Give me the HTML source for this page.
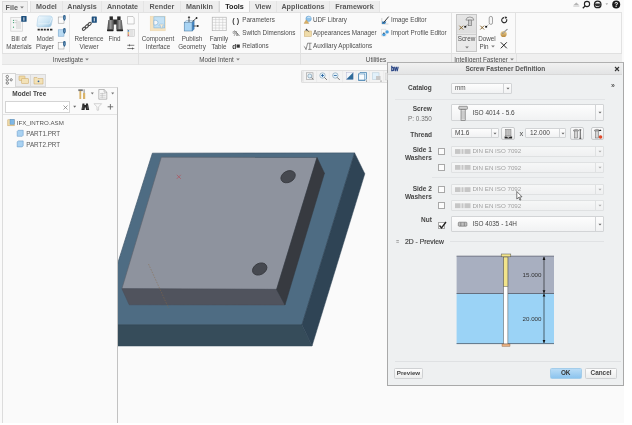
<!DOCTYPE html>
<html><head><meta charset="utf-8">
<style>
*{margin:0;padding:0;box-sizing:border-box}
html,body{width:632px;height:425px;overflow:hidden;background:#ffffff}
body{position:relative;font-family:"Liberation Sans",sans-serif;color:#4a4a4a}
.a{position:absolute}
.t{position:absolute;white-space:nowrap;line-height:1}
#app{will-change:transform;position:absolute;left:0;top:0;width:624px;height:423px;background:#fafafa;overflow:hidden}
/* tab bar */
#tabbar{left:0;top:0;width:624px;height:12px;background:#fafafa}
.tab{position:absolute;top:1px;height:11.5px;background:#eeeeee;border-right:1px solid #e4e4e4;font-weight:bold;font-size:7.2px;color:#5a5a5a;text-align:center;line-height:11px}
/* ribbon */
#ribbon{left:2px;top:12px;width:620px;height:53px;border:1px solid #e2e2e2;background:#fafafa}
#gbar{left:2px;top:53px;width:620px;height:12px;background:#efefef;border-top:1px solid #e0e0e0;border-bottom:1px solid #e4e4e4}
.sep{position:absolute;width:1px;background:#e6e6e6}
.lbl{font-size:6.3px;color:#4d4d4d;text-align:center}
.glbl{font-size:6.3px;color:#4d4d4d}
.ddv{display:inline-block;vertical-align:middle;margin-left:2px;position:relative;top:-0.6px}
.ddold{display:inline-block;width:0;height:0;border-left:1.8px solid transparent;border-right:1.8px solid transparent;border-top:2.2px solid #808080;vertical-align:middle;margin-left:2px;position:relative;top:-0.5px}
</style></head>
<body>
<div id="app">
  <!-- tab bar -->
  <div class="a" id="tabbar">
    <div class="tab" style="left:2px;width:26px;border:1px solid #dcdcdc;background:#f0f0f0">File<svg class="ddv" style="margin-left:2.5px" width="4" height="3" viewBox="0 0 4 3"><path d="M0.2,0.4 H3.8 L2,2.6z" fill="#7a7a7a"/></svg></div>
    <div class="tab" style="left:30px;width:33px;border-left:1px solid #e2e2e2">Model</div>
    <div class="tab" style="left:63px;width:39px">Analysis</div>
    <div class="tab" style="left:102px;width:42px">Annotate</div>
    <div class="tab" style="left:144px;width:37px">Render</div>
    <div class="tab" style="left:181px;width:38px">Manikin</div>
    <div class="tab" style="left:219px;width:31px;background:#fafafa;color:#222;border-left:1px solid #d8d8d8;border-right:1px solid #d8d8d8;height:12px">Tools</div>
    <div class="tab" style="left:250px;width:27px">View</div>
    <div class="tab" style="left:277px;width:53px">Applications</div>
    <div class="tab" style="left:330px;width:50px">Framework</div>
  </div>
  <div class="a" id="ribbon"></div>
  <div class="a" id="gbar"></div>

  <!-- ribbon content -->
  <div class="sep" style="left:69px;top:14px;height:38px"></div>
  <div class="sep" style="left:138px;top:13px;height:40px;background:#e2e2e2"></div>
  <div class="sep" style="left:300px;top:13px;height:40px;background:#e2e2e2"></div>
  <div class="sep" style="left:451px;top:13px;height:40px;background:#e2e2e2"></div>
  <div class="sep" style="left:515px;top:13px;height:40px;background:#e2e2e2"></div>
  <div class="sep" style="left:138px;top:53px;height:12px;background:#e0e0e0"></div>
  <div class="sep" style="left:300px;top:53px;height:12px;background:#e0e0e0"></div>
  <div class="sep" style="left:451px;top:53px;height:12px;background:#e0e0e0"></div>
  <div class="sep" style="left:516px;top:53px;height:12px;background:#e0e0e0"></div>

  <div class="t lbl" style="left:4px;top:35.5px;width:30px">Bill of</div>
  <div class="t lbl" style="left:4px;top:43.5px;width:30px">Materials</div>
  <div class="t lbl" style="left:34px;top:35.5px;width:22px">Model</div>
  <div class="t lbl" style="left:34px;top:43.5px;width:22px">Player</div>
  <div class="t lbl" style="left:74px;top:35.5px;width:30px">Reference</div>
  <div class="t lbl" style="left:74px;top:43.5px;width:30px">Viewer</div>
  <div class="t lbl" style="left:105px;top:35.5px;width:19px">Find</div>
  <div class="t lbl" style="left:140px;top:35.5px;width:36px">Component</div>
  <div class="t lbl" style="left:140px;top:43.5px;width:36px">Interface</div>
  <div class="t lbl" style="left:176px;top:35.5px;width:32px">Publish</div>
  <div class="t lbl" style="left:176px;top:43.5px;width:32px">Geometry</div>
  <div class="t lbl" style="left:208px;top:35.5px;width:22px">Family</div>
  <div class="t lbl" style="left:208px;top:43.5px;width:22px">Table</div>
  <div class="t glbl" style="left:242.3px;top:16.8px">Parameters</div>
  <div class="t glbl" style="left:242.3px;top:30.2px">Switch Dimensions</div>
  <div class="t glbl" style="left:242.3px;top:42.9px">Relations</div>
  <div class="t glbl" style="left:313px;top:16.8px">UDF Library</div>
  <div class="t glbl" style="left:313px;top:30.2px">Appearances Manager</div>
  <div class="t glbl" style="left:313px;top:42.9px">Auxiliary Applications</div>
  <div class="t glbl" style="left:391px;top:16.8px">Image Editor</div>
  <div class="t glbl" style="left:391px;top:30.2px">Import Profile Editor</div>
  <div class="a" style="left:456.2px;top:14.2px;width:20.5px;height:37.8px;background:linear-gradient(#e6e6e6,#dedede 50%,#ebebeb 52%,#e9e9e9);border:1px solid #c6c6c6"></div>
  <div class="a" style="left:457px;top:34px;width:19px;height:1px;background:#cfcfcf"></div>
  <div class="t lbl" style="left:456px;top:36.2px;width:21px">Screw</div>
  <div class="t lbl" style="left:456px;top:44.6px;width:21px"><svg class="ddv" style="margin-left:0" width="4" height="3" viewBox="0 0 4 3"><path d="M0.2,0.4 H3.8 L2,2.6z" fill="#7a7a7a"/></svg></div>
  <div class="t lbl" style="left:478px;top:36.2px;width:18px">Dowel</div>
  <div class="t lbl" style="left:478px;top:43.6px;width:18px">Pin<svg class="ddv" width="4" height="3" viewBox="0 0 4 3"><path d="M0.2,0.4 H3.8 L2,2.6z" fill="#7a7a7a"/></svg></div>

  <div class="t glbl" style="left:4px;top:56.5px;width:134px;text-align:center">Investigate<svg class="ddv" width="4" height="3" viewBox="0 0 4 3"><path d="M0.2,0.4 H3.8 L2,2.6z" fill="#7a7a7a"/></svg></div>
  <div class="t glbl" style="left:139px;top:56.5px;width:161px;text-align:center">Model Intent<svg class="ddv" width="4" height="3" viewBox="0 0 4 3"><path d="M0.2,0.4 H3.8 L2,2.6z" fill="#7a7a7a"/></svg></div>
  <div class="t glbl" style="left:301px;top:56.5px;width:150px;text-align:center">Utilities</div>
  <div class="t glbl" style="left:452px;top:56.5px;width:64px;text-align:center">Intelligent Fastener<svg class="ddv" width="4" height="3" viewBox="0 0 4 3"><path d="M0.2,0.4 H3.8 L2,2.6z" fill="#7a7a7a"/></svg></div>


  <!-- graphics toolbar -->
  <div class="a" style="left:301px;top:70px;width:92px;height:13px;background:#f3f3f3;border:1px solid #e0e0e0;border-radius:1px"></div>

  <!-- 3D model -->
  <svg class="a" style="left:0;top:0" width="624" height="423" viewBox="0 0 624 423">
    <defs><clipPath id="vp"><rect x="118" y="86" width="506" height="337"/></clipPath></defs>
    <g clip-path="url(#vp)">
      <polygon points="152.4,153.2 354.6,152.9 302,324.7 98.4,324.7" fill="#4e6c83" stroke="#3f586b" stroke-width="0.7" stroke-linejoin="round"/>
      <polygon points="98.4,324.7 302,324.7 312,346 108.4,346" fill="#364c5a" stroke="#33485a" stroke-width="0.5"/>
      <polygon points="354.6,152.9 364.8,173.8 312,346 302,324.7" fill="#2f4455" stroke="#2d4152" stroke-width="0.5"/>
      <polygon points="161.3,157.2 317,157.5 276.6,289.4 121.9,288.7" fill="#8e939e" stroke="#5d626c" stroke-width="0.6" stroke-linejoin="round"/>
      <polygon points="121.9,288.7 276.6,289.4 285,305 129.2,304.8" fill="#50535d" stroke="#4a4d56" stroke-width="0.5"/>
      <polygon points="317,157.5 324.5,173.2 285,305 276.6,289.4" fill="#373a40" stroke="#35383e" stroke-width="0.5"/>
      <ellipse cx="288.1" cy="176.7" rx="7.6" ry="5.6" transform="rotate(-28 288.1 176.7)" fill="#464950" stroke="#36383e" stroke-width="0.8"/>
      <ellipse cx="259.7" cy="269" rx="7.6" ry="5.6" transform="rotate(-28 259.7 269)" fill="#464950" stroke="#36383e" stroke-width="0.8"/>
      <path d="M176.8,174.8 l4,4 M180.8,174.8 l-4,4" stroke="#b0505a" stroke-width="0.7"/>
      <path d="M148.5,264 L168.5,308" stroke="#8a6a48" stroke-width="0.55" stroke-dasharray="1.6,1.2" opacity="0.85"/>
    </g>
  </svg>

  <!-- dialog -->
  <div class="a" id="dlg" style="left:387px;top:62px;width:236.5px;height:323.5px;background:#eef0f1;border:1.5px solid #a9a9a9;border-top-color:#b0b0b0">
    <div class="a" style="left:0;top:0;width:233.5px;height:11.5px;background:linear-gradient(#f1f1f1,#e3e4e5);border-bottom:1px solid #d8d8d8"></div>
  </div>


  <!-- ribbon icons -->
  <svg class="a" style="left:0;top:0" width="624" height="70" viewBox="0 0 624 70">
    <defs>
      <linearGradient id="gslab" x1="0" y1="0" x2="1" y2="1"><stop offset="0" stop-color="#f4fbff"/><stop offset="0.6" stop-color="#c9e3f3"/><stop offset="1" stop-color="#8ab7d6"/></linearGradient>
      <linearGradient id="gbin" x1="0" y1="0" x2="1" y2="0"><stop offset="0" stop-color="#3a3a3a"/><stop offset="0.5" stop-color="#9a9a9a"/><stop offset="1" stop-color="#4a4a4a"/></linearGradient>
      <linearGradient id="gball" x1="0" y1="0" x2="0" y2="1"><stop offset="0" stop-color="#f0d9a0"/><stop offset="1" stop-color="#b8873a"/></linearGradient>
    </defs>
    <!-- BOM -->
    <rect x="10.8" y="17.4" width="11.8" height="13.8" fill="#f6f6f6" stroke="#cfcfcf" stroke-width="0.7"/>
    <rect x="16" y="21" width="5" height="8" fill="#e3e3e3"/>
    <circle cx="13.5" cy="20.3" r="0.6" fill="#3aa070"/><circle cx="13.5" cy="22.6" r="0.6" fill="#3aa070"/><circle cx="13.5" cy="27.2" r="0.6" fill="#3aa070"/>
    <path d="M14.5,20.3h3 M14.5,22.6h2" stroke="#aaa" stroke-width="0.5"/>
    <rect x="21.2" y="16" width="5.4" height="5.8" rx="0.6" fill="#1d4f7d"/>
    <path d="M23.9,17.3v3.4" stroke="#fff" stroke-width="0.9"/>
    <!-- Model player -->
    <path d="M39.5,15.9 H50.2 Q52.8,16.2 52.4,19.5 L51.3,25 Q50.8,27 48.8,27 H38.6 Q36.7,27 36.9,25.2 L37.8,18.2 Q38.3,16 39.5,15.9z" fill="url(#gslab)" stroke="#a9cbe2" stroke-width="0.5"/>
    <path d="M38.3,23.8 H48.5 Q50,23.8 50.3,22 L51.8,18" fill="none" stroke="#ffffff" stroke-width="0.6" opacity="0.8"/>
    <path d="M37.6,29.7h2.2 M40.7,29.7h2.2 M43.8,29.7h2 M46.8,29.7h2.2 M50,29.7h2.4" stroke="#2a2a2a" stroke-width="1.7"/>
    <!-- small icons col 1 -->
    <rect x="58.2" y="17" width="5.8" height="6.2" fill="#fbfbfb" stroke="#8e8e8e" stroke-width="0.5"/>
    <rect x="58.2" y="29.8" width="5.8" height="6.4" fill="#b9daf2" stroke="#6a9cc6" stroke-width="0.5"/>
    <rect x="58.2" y="42.6" width="5.8" height="6.4" fill="#fbfbfb" stroke="#8e8e8e" stroke-width="0.5"/>
    <path d="M63.1,16.4 a1.3,1.3 0 0 1 2.6,0 v2.6 l-1.3,2 l-1.3,-2z" fill="#2f628f"/>
    <path d="M63.1,29.4 a1.3,1.3 0 0 1 2.6,0 v2.6 l-1.3,2 l-1.3,-2z" fill="#2f628f"/>
    <path d="M63.1,42.4 a1.3,1.3 0 0 1 2.6,0 v2.6 l-1.3,2 l-1.3,-2z" fill="#2f628f"/>
    <path d="M64.4,16.6v2.4 M64.4,29.6v2.4 M64.4,42.6v2.4" stroke="#9cc4e4" stroke-width="0.5"/>
    <!-- Reference viewer chain -->
    <g fill="none" stroke="#4a4a4a" stroke-width="1.1">
      <ellipse cx="84" cy="28.7" rx="1.9" ry="1.2" transform="rotate(-40 84 28.7)"/>
      <ellipse cx="86.8" cy="26.3" rx="1.9" ry="1.2" transform="rotate(-40 86.8 26.3)"/>
      <ellipse cx="89.6" cy="23.9" rx="1.9" ry="1.2" transform="rotate(-40 89.6 23.9)"/>
    </g>
    <rect x="91.7" y="16.4" width="5.1" height="6.4" rx="0.6" fill="#1d4f7d"/>
    <path d="M94.25,17.8v3.6" stroke="#fff" stroke-width="0.9"/>
    <!-- binoculars -->
    <rect x="109.5" y="16.4" width="3.4" height="4" fill="#2a2a2a"/>
    <rect x="117.2" y="16.4" width="3.4" height="4" fill="#2a2a2a"/>
    <rect x="112.5" y="19.5" width="5" height="5" fill="#2e2e2e"/>
    <path d="M108.3,20 h5.5 v9.5 h-6.5z" fill="url(#gbin)"/>
    <path d="M116.3,20 h5.5 l1,9.5 h-6.5z" fill="url(#gbin)"/>
    <rect x="107" y="29.3" width="6.6" height="1.9" rx="0.6" fill="#222"/>
    <rect x="116.5" y="29.3" width="6.6" height="1.9" rx="0.6" fill="#222"/>
    <!-- small icons col 2 -->
    <path d="M127.5,16.5h5.5l1.2,1.5v6h-6.7z" fill="#fbfbfb" stroke="#9a9a9a" stroke-width="0.5"/>
    <rect x="127.2" y="29.3" width="7.2" height="7.2" fill="#f5f5f5" stroke="#b8b8b8" stroke-width="0.5"/>
    <rect x="127.8" y="30.2" width="1.4" height="1.4" fill="#2f6fb0"/><rect x="127.8" y="32.3" width="1.4" height="1.4" fill="#e0a030"/><rect x="127.8" y="34.4" width="1.4" height="1.4" fill="#c05050"/>
    <path d="M130,31h3.5 M130,33h3.5 M130,35h3.5" stroke="#aaa" stroke-width="0.5"/>
    <path d="M127.3,45.3h7 M127.3,48.5h7 M129.5,44.3v2 M132.5,47.5v2" stroke="#333" stroke-width="0.6"/>
    <!-- component interface -->
    <rect x="150.2" y="16.2" width="15" height="14.6" fill="#f6e3c0" stroke="#ecd6ad" stroke-width="0.5"/>
    <rect x="153.9" y="16.8" width="10.8" height="11.1" fill="#c4e1f4" stroke="#86b7dc" stroke-width="0.6"/>
    <path d="M153.9,20.3 h1.8 a2.3,2.3 0 1 1 0,4.6 h-1.8z" fill="#f6f6f6" stroke="#6aa6d6" stroke-width="0.5"/>
    <path d="M160.6,27.9 v-2.2 h-1.8 q0,-1.4 1.2,-1.6 h3.2 q1.2,0.2 1.2,1.6 h-1.8 v2.2z" fill="#f8ecd4" stroke="#86b7dc" stroke-width="0.5"/>
    <!-- publish geometry -->
    <rect x="184.2" y="22.5" width="8" height="8.5" fill="#a8d4f4" stroke="#3a6d98" stroke-width="0.5"/>
    <path d="M184.2,22.5 l2,-1.8 h8 l-2,1.8z" fill="#d8eefc" stroke="#3a6d98" stroke-width="0.4"/>
    <path d="M192.2,22.5 l2,-1.8 v8.5 l-2,1.8z" fill="#3f86c8" stroke="#3a6d98" stroke-width="0.4"/>
    <path d="M189,22 v-5 M192.5,21.5 l4,-3.5 M193.5,26 h4" stroke="#222" stroke-width="0.7"/>
    <path d="M187.7,17.8 l1.3,-1.8 l1.3,1.8z" fill="#222"/>
    <circle cx="196.6" cy="18" r="0.9" fill="#222"/><circle cx="197.8" cy="26" r="0.9" fill="#222"/>
    <!-- family table -->
    <rect x="212.2" y="17.2" width="14" height="13.5" fill="#fbfbfb" stroke="#a8a8a8" stroke-width="0.6"/>
    <path d="M212.2,19.6h14 M212.2,22.4h14 M212.2,25.2h14 M212.2,28h14 M215.7,17.2v13.5 M219.2,17.2v13.5 M222.7,17.2v13.5" stroke="#c4c4c4" stroke-width="0.5"/>
    <!-- parameters/switch/relations icons -->
    <text x="232.3" y="22.8" font-family="Liberation Sans" font-weight="bold" font-size="7.4" fill="#3a3a3a">( )</text>
    <text x="232.5" y="36.2" font-family="Liberation Sans" font-weight="bold" font-size="6.6" fill="#8a8a8a">%</text>
    <path d="M234.5,30.5 l5,5.5" stroke="#333" stroke-width="0.6"/>
    <text x="232.2" y="48.5" font-family="Liberation Sans" font-weight="bold" font-size="6.6" fill="#333">d</text>
    <rect x="236.6" y="44.5" width="3.2" height="3.2" fill="#333"/>
    <!-- UDF / appearances / auxiliary -->
    <circle cx="308.6" cy="18.8" r="2.7" fill="#8fc3ea" stroke="#5a96c8" stroke-width="0.5"/>
    <path d="M307.5,17.5 q1.5,-1 3,0.2" stroke="#fff" stroke-width="0.7" fill="none"/>
    <path d="M304,23.4 l2.2,-3.6 l2.8,3.6z" fill="#d8b066" stroke="#b08840" stroke-width="0.3"/>
    <rect x="304.3" y="31" width="7" height="5.3" fill="#efdcaa" stroke="#c9a868" stroke-width="0.5"/>
    <path d="M305.2,30.6 l1.2,-2 l1.5,1.6z" fill="#333"/>
    <path d="M306.2,29.6 l3,2.2" stroke="#333" stroke-width="0.6"/>
    <path d="M303.8,46.2 l1,0.8 l1.2,2.6 l1.6,-6.4 h4" fill="none" stroke="#555" stroke-width="0.65"/>
    <path d="M309.8,43.2 v6.2 M308.2,49.4 h3.4" stroke="#555" stroke-width="0.65"/>
    <!-- image editor / import profile -->
    <path d="M381.8,18 v6 h6.6" fill="none" stroke="#c8c8c8" stroke-width="0.8"/>
    <path d="M382,21.5 h4.5 l-1.5,2.4 h-3z" fill="#3f86c0"/>
    <path d="M383.5,22.8 l5.2,-6.2" stroke="#3a3a3a" stroke-width="1"/>
    <path d="M381.5,29.3 h4.5 v6.7 h-4.5z" fill="#fafafa" stroke="#c0c0c0" stroke-width="0.4"/>
    <circle cx="383.9" cy="34.6" r="1.7" fill="#4aa0e0"/><circle cx="387.1" cy="31.9" r="1.7" fill="#4aa0e0"/>
    <circle cx="383.9" cy="33.1" r="0.7" fill="#222"/>
    <!-- screw button icon -->
    <path d="M459.4,25.7 l3.8,3.8 M463.2,25.7 l-3.8,3.8" stroke="#8a6a35" stroke-width="1"/>
    <rect x="464.3" y="25.9" width="1.9" height="1.7" fill="#111"/>
    <path d="M466,25.9 l2.2,-1.6" stroke="#666" stroke-width="0.4"/>
    <path d="M465.9,20.1 q0.3,-3.1 4,-3.1 q3.7,0 4,3.1z" fill="#e8e8e8" stroke="#6a6a6a" stroke-width="0.6"/>
    <rect x="468.6" y="20.1" width="3" height="5.6" fill="#d8d8d8" stroke="#6a6a6a" stroke-width="0.6"/>
    <path d="M468.8,22h2.6 M468.8,23.8h2.6" stroke="#999" stroke-width="0.4"/>
    <!-- dowel pin -->
    <path d="M480.3,25.7 l3.8,3.8 M484.1,25.7 l-3.8,3.8" stroke="#8a6a35" stroke-width="1"/>
    <rect x="485.2" y="25.9" width="1.9" height="1.7" fill="#111"/>
    <path d="M487,25.9 l1.6,-1.4" stroke="#666" stroke-width="0.4"/>
    <rect x="489.2" y="16.4" width="3.3" height="8" rx="1.6" fill="#f6f6f6" stroke="#6a6a6a" stroke-width="0.6"/>
    <!-- small icons fastener -->
    <path d="M504.2,17.6 A2.55,2.55 0 1 0 506.6,19.2" fill="none" stroke="#222" stroke-width="1.1"/>
    <path d="M504.6,16.4 l2.6,0.6 l-1.4,2.2z" fill="#222"/>
    <circle cx="503.6" cy="34" r="3.1" fill="url(#gball)"/>
    <path d="M502.2,33.6 l5.2,-4.4" stroke="#666" stroke-width="1.1"/>
    <path d="M502.4,33.4 l5,-4.2" stroke="#eee" stroke-width="0.5"/>
    <path d="M500.8,42.3 l6,6 M506.8,42.3 l-6,6" stroke="#222" stroke-width="1"/>
    <!-- top right icons -->
    <path d="M573.3,5.2 l3,-2.8 l3,2.8z" fill="#b4b4b4"/>
    <path d="M573.3,6.2h6" stroke="#c4c4c4" stroke-width="0.8"/>
    <circle cx="587" cy="4" r="2.6" fill="none" stroke="#222" stroke-width="1.1"/>
    <path d="M585.2,5.9 l-2.4,2.3" stroke="#222" stroke-width="1.3"/>
    <circle cx="597.7" cy="4.4" r="3.3" fill="#f4f4f4" stroke="#222" stroke-width="1.2"/>
    <path d="M594.6,3.6 h6.2 v1.4 q-3.1,2.6 -6.2,0z" fill="#333"/>
    <path d="M605.5,3.4h2.6l-1.3,1.4z" fill="#888"/>
    <circle cx="616.2" cy="4.5" r="4" fill="#1a1a1a"/>
    <text x="616.2" y="7" font-family="Liberation Sans" font-weight="bold" font-size="6.5" fill="#fff" text-anchor="middle">?</text>
  </svg>


  <!-- graphics toolbar icons -->
  <svg class="a" style="left:296px;top:66px" width="96" height="20" viewBox="296 66 96 20">
    <path d="M303.5,71 v11 M316.6,71 v11 M329.3,71 v11 M342.6,71 v11 M356.1,71 v11 M369.4,71 v11 M383.7,71 v11" stroke="#e4e4e4" stroke-width="0.6"/>
    <path d="M302,71.5 v10" stroke="#d0d0d0" stroke-width="0.8"/>
    <rect x="306.5" y="72.8" width="6.5" height="6.5" fill="#f6f6f6" stroke="#999" stroke-width="0.6"/>
    <circle cx="309.8" cy="76" r="2" fill="#dff0fa" stroke="#6a8aa0" stroke-width="0.6"/><path d="M311.3,77.5 l2,2" stroke="#555" stroke-width="0.8"/>
    <circle cx="322.5" cy="75.5" r="2.7" fill="#e6f4fc" stroke="#7a9ab0" stroke-width="0.6"/><path d="M324.4,77.4 l2.5,2.5" stroke="#555" stroke-width="0.8"/><path d="M321,75.5h3 M322.5,74v3" stroke="#1e5c9c" stroke-width="0.8"/>
    <circle cx="335.3" cy="75.5" r="2.7" fill="#e6f4fc" stroke="#7a9ab0" stroke-width="0.6"/><path d="M337.2,77.4 l2.5,2.5" stroke="#555" stroke-width="0.8"/><path d="M333.8,75.5h3" stroke="#1e5c9c" stroke-width="0.8"/>
    <rect x="346.2" y="72.5" width="7" height="7" fill="#f2f6fa" stroke="#aac" stroke-width="0.4"/>
    <path d="M346.2,79.5 l7,-7 v7z" fill="#2f6b9a"/>
    <path d="M358.5,74 l1.5,-1.5 h6.5 v6.5 l-1.5,1.5 h-6.5z" fill="#dbeefa" stroke="#3a79aa" stroke-width="0.7"/>
    <rect x="358.8" y="74" width="6" height="6" fill="#f8fbfd" stroke="#3a79aa" stroke-width="0.5"/>
    <circle cx="366.6" cy="81" r="0.5" fill="#333"/>
    <rect x="372.5" y="72.8" width="6.5" height="6.5" fill="#e2f1fb" stroke="#b0c8d8" stroke-width="0.5"/>
    <rect x="376" y="76" width="4.5" height="4" fill="#c8c8c8"/>
    <circle cx="381" cy="81" r="0.5" fill="#333"/>
    <rect x="385.5" y="73" width="2" height="7" fill="#e8e8e8" stroke="#ccc" stroke-width="0.4"/>
  </svg>

  <!-- left panel -->
  <div class="a" style="left:2px;top:72.5px;width:14px;height:15.5px;background:#fafafa;border:1px solid #d6d6d6;border-bottom:none"></div>
  <div class="a" style="left:16px;top:73.5px;width:14.5px;height:13.5px;background:#ececec;border:1px solid #dadada;border-left:none"></div>
  <div class="a" style="left:30.5px;top:73.5px;width:15px;height:13.5px;background:#ececec;border:1px solid #dadada;border-left:none"></div>
  <div class="a" style="left:2px;top:87px;width:116px;height:336px;border-left:1px solid #dcdcdc;border-right:1.5px solid #c2c2c2;border-top:1px solid #dadada;background:#fafafa"></div>
  <div class="t" style="left:12.3px;top:90.5px;font-size:6.5px;font-weight:bold;color:#444">Model Tree</div>
  <div class="a" style="left:4.5px;top:101px;width:65.5px;height:11.5px;background:#fff;border:1px solid #d4d4d4"></div>
  <svg class="a" style="left:63px;top:104.5px" width="5" height="5"><path d="M0.5,0.5 L4.5,4.5 M4.5,0.5 L0.5,4.5" stroke="#777" stroke-width="0.7"/></svg>
  <div class="a" style="left:3px;top:114px;width:114px;height:1px;background:#e3e3e3"></div>
  <div class="t" style="left:16.7px;top:120px;font-size:6.15px;color:#555">IFX_INTRO.ASM</div>
  <div class="t" style="left:26.2px;top:131px;font-size:6.3px;color:#555">PART1.PRT</div>
  <div class="t" style="left:26.2px;top:141.6px;font-size:6.3px;color:#555">PART2.PRT</div>
  <!-- panel icons -->
  <svg class="a" style="left:0;top:0" width="120" height="150">
    <!-- tab1 tree icon -->
    <g fill="none" stroke="#555" stroke-width="0.7"><circle cx="7.3" cy="76.5" r="1.2"/><circle cx="7.3" cy="79.8" r="1.2"/><circle cx="7.3" cy="83.1" r="1.2"/><circle cx="11.2" cy="79.8" r="1.1"/></g>
    <!-- tab2 stacked -->
    <rect x="19" y="76" width="6" height="4.5" rx="0.5" fill="#f1dca8" stroke="#caa460" stroke-width="0.5"/>
    <rect x="21.5" y="78.5" width="7" height="5" rx="0.5" fill="#f3e2b8" stroke="#caa460" stroke-width="0.5"/>
    <!-- tab3 folder -->
    <path d="M34,77.5 h3 l1,1 h5 v5.5 h-9z" fill="#f3e2b8" stroke="#caa460" stroke-width="0.5"/>
    <circle cx="38.5" cy="81.3" r="0.9" fill="#2a5fa0"/>
    <!-- hammer/screwdriver -->
    <rect x="78.3" y="89.3" width="4.5" height="1.8" fill="#777"/>
    <rect x="79.4" y="91" width="1.8" height="8" fill="#d9b46a"/>
    <rect x="83.6" y="89.3" width="1" height="4" fill="#888"/>
    <rect x="83" y="93" width="2.2" height="6" fill="#d9b46a"/>
    <path d="M90.8,92.6 h3 l-1.5,1.9z" fill="#777"/>
    <!-- doc icon -->
    <path d="M98.8,89.5 h5.3 l2.7,2.7 v7 h-8z" fill="#f8f8f8" stroke="#8a8a8a" stroke-width="0.55"/>
    <path d="M104.1,89.5 v2.7 h2.7" fill="none" stroke="#8a8a8a" stroke-width="0.45"/>
    <path d="M100,93.6h5.6 M100,95.4h5.6 M100,97.2h5.6 M102.2,92.8v5.4" stroke="#a8a8a8" stroke-width="0.45"/>
    <path d="M111.2,92.6 h3 l-1.5,1.9z" fill="#777"/>
    <!-- search row -->
    <path d="M73.2,105.8 h3 l-1.5,1.9z" fill="#666"/>
    <path d="M82.5,103.6 h2 v1.4 h1.4 v-1.4 h2 l1.3,6.4 h-3.2 l-0.3,-2.4 h-0.8 l-0.3,2.4 h-3.2z" fill="#2a2a2a"/><path d="M82.8,105.5 v3.5 M87.8,105.5 v3.5" stroke="#888" stroke-width="0.5"/>
    <path d="M94,103.7 h7.6 l-3,3.2 v3.3 h-1.6 v-3.3z" fill="none" stroke="#bbb" stroke-width="0.6"/>
    <path d="M107.6,106.8 h5.6 M110.4,104 v5.6" stroke="#666" stroke-width="0.9"/>
    <!-- tree icons -->
    <rect x="7.8" y="119.8" width="6.4" height="6" fill="#f1dca8" stroke="#c9a060" stroke-width="0.5"/>
    <rect x="10" y="119.3" width="4.2" height="5" fill="#7fb8e6" stroke="#4a86c0" stroke-width="0.4"/>
    <path d="M17.2,131.3 l1,-1 h5 v5 l-1,1 h-5z" fill="#a9d2f2" stroke="#5a90c0" stroke-width="0.5"/>
    <path d="M17.2,141.9 l1,-1 h5 v5 l-1,1 h-5z" fill="#a9d2f2" stroke="#5a90c0" stroke-width="0.5"/>
  </svg>

<!-- DIALOG CONTENT -->
<svg class="a" style="left:390px;top:65px" width="10" height="8"><text x="0.9" y="6.3" font-family="Liberation Sans" font-weight="bold" font-size="6.4" fill="#1d3a7e" stroke="#1d3a7e" stroke-width="0.35" textLength="7.4" lengthAdjust="spacingAndGlyphs">bw</text></svg>
<div class="t" style="left:455.3px;width:100px;text-align:center;top:66.1px;font-size:6.5px;font-weight:bold;color:#555;">Screw Fastener Definition</div>
<svg class="a" style="left:613.5px;top:66.2px" width="6" height="6"><path d="M1,1 L5,5 M5,1 L1,5" stroke="#333" stroke-width="1.1"/></svg>
<div class="t" style="left:563.0px;width:100px;text-align:center;top:81.6px;font-size:7px;font-weight:bold;color:#555;">»</div>
<div class="t" style="right:192.2px;top:84.9px;font-size:6.5px;font-weight:bold;color:#454545;">Catalog</div>
<div class="a" style="left:451px;top:82.7px;width:61px;height:11.0px;background:linear-gradient(#fdfdfd,#f1f2f3);border:1px solid #d2d4d6;border-radius:1px"></div><div class="a" style="left:503px;top:83.7px;width:1px;height:9.0px;background:#d2d4d6"></div><svg class="a" style="left:505.5px;top:86.7px" width="4" height="3"><path d="M0.5,0.8 L3.5,0.8 L2,2.5z" fill="#666"/></svg>
<div class="t" style="left:455.0px;top:85.4px;font-size:6.4px;font-weight:normal;color:#555;">mm</div>
<div class="a" style="left:395px;top:98.5px;width:210px;height:1px;background:#e2e4e6"></div>
<div class="t" style="right:192.2px;top:105.9px;font-size:6.5px;font-weight:bold;color:#454545;">Screw</div>
<div class="t" style="right:192.2px;top:115.9px;font-size:6.4px;font-weight:normal;color:#707070;">P: 0.350</div>
<div class="a" style="left:451px;top:104.4px;width:153.39999999999998px;height:17.0px;background:linear-gradient(#fdfdfd,#f1f2f3);border:1px solid #d2d4d6;border-radius:1px"></div><div class="a" style="left:595.4px;top:105.4px;width:1px;height:15.0px;background:#d2d4d6"></div><svg class="a" style="left:597.9px;top:111.4px" width="4" height="3"><path d="M0.5,0.8 L3.5,0.8 L2,2.5z" fill="#666"/></svg>
<div class="t" style="left:472.4px;top:110.3px;font-size:6.5px;font-weight:normal;color:#444;">ISO 4014 - 5.6</div>
<div class="t" style="right:192.0px;top:131.7px;font-size:6.5px;font-weight:bold;color:#454545;">Thread</div>
<div class="a" style="left:451.3px;top:127.7px;width:47.599999999999966px;height:10.700000000000003px;background:linear-gradient(#fdfdfd,#f1f2f3);border:1px solid #d2d4d6;border-radius:1px"></div><div class="a" style="left:491.4px;top:128.7px;width:1px;height:8.700000000000003px;background:#d2d4d6"></div><svg class="a" style="left:493.15px;top:131.55px" width="4" height="3"><path d="M0.5,0.8 L3.5,0.8 L2,2.5z" fill="#666"/></svg>
<div class="t" style="left:455.0px;top:130.1px;font-size:6.5px;font-weight:normal;color:#444;">M1.6</div>
<div class="a" style="left:501.4px;top:126.9px;width:13.8px;height:13.4px;background:linear-gradient(#fbfbfb,#e9eaeb);border:1px solid #c9cbcd;border-radius:2px"></div>
<div class="t" style="left:471.3px;width:100px;text-align:center;top:129.5px;font-size:7.5px;font-weight:normal;color:#4a4a4a;">x</div>
<div class="a" style="left:525.4px;top:127.7px;width:41.10000000000002px;height:10.700000000000003px;background:linear-gradient(#fdfdfd,#f1f2f3);border:1px solid #d2d4d6;border-radius:1px"></div><div class="a" style="left:559.0px;top:128.7px;width:1px;height:8.700000000000003px;background:#d2d4d6"></div><svg class="a" style="left:560.75px;top:131.55px" width="4" height="3"><path d="M0.5,0.8 L3.5,0.8 L2,2.5z" fill="#666"/></svg>
<div class="t" style="left:530.0px;top:130.1px;font-size:6.5px;font-weight:normal;color:#444;">12.000</div>
<div class="a" style="left:570px;top:126.9px;width:13.5px;height:13.4px;background:linear-gradient(#fbfbfb,#e9eaeb);border:1px solid #c9cbcd;border-radius:2px"></div>
<div class="a" style="left:591px;top:126.9px;width:13.4px;height:13.4px;background:linear-gradient(#fbfbfb,#e9eaeb);border:1px solid #c9cbcd;border-radius:2px"></div>
<div class="t" style="right:192.2px;top:146.9px;font-size:6.5px;font-weight:bold;color:#454545;">Side 1</div>
<div class="t" style="right:192.2px;top:154.9px;font-size:6.5px;font-weight:bold;color:#454545;">Washers</div>
<div class="a" style="left:438px;top:147.5px;width:7px;height:7px;background:#fcfcfc;border:1px solid #a8a8a8"></div>
<div class="a" style="left:451px;top:146px;width:153.39999999999998px;height:10.5px;background:linear-gradient(#f6f7f7,#eff0f1);border:1px solid #dfe1e2;border-radius:1px"></div><div class="a" style="left:595.4px;top:147px;width:1px;height:8.5px;background:#dfe1e2"></div><svg class="a" style="left:597.9px;top:149.75px" width="4" height="3"><path d="M0.5,0.8 L3.5,0.8 L2,2.5z" fill="#aaa"/></svg>
<div class="t" style="left:472.4px;top:148.3px;font-size:6.2px;font-weight:normal;color:#a2a2a2;">DIN EN ISO 7092</div>
<div class="a" style="left:438px;top:163.6px;width:7px;height:7px;background:#fcfcfc;border:1px solid #a8a8a8"></div>
<div class="a" style="left:451px;top:162px;width:153.39999999999998px;height:11px;background:linear-gradient(#f6f7f7,#eff0f1);border:1px solid #dfe1e2;border-radius:1px"></div><div class="a" style="left:595.4px;top:163px;width:1px;height:9px;background:#dfe1e2"></div><svg class="a" style="left:597.9px;top:166.0px" width="4" height="3"><path d="M0.5,0.8 L3.5,0.8 L2,2.5z" fill="#aaa"/></svg>
<div class="t" style="left:472.4px;top:164.5px;font-size:6.2px;font-weight:normal;color:#a2a2a2;">DIN EN ISO 7092</div>
<div class="a" style="left:432px;top:176.6px;width:172px;height:1px;background:#e2e4e6"></div>
<div class="t" style="right:192.2px;top:186.1px;font-size:6.5px;font-weight:bold;color:#454545;">Side 2</div>
<div class="t" style="right:192.2px;top:194.3px;font-size:6.5px;font-weight:bold;color:#454545;">Washers</div>
<div class="a" style="left:438px;top:186.4px;width:7px;height:7px;background:#fcfcfc;border:1px solid #a8a8a8"></div>
<div class="a" style="left:451px;top:184px;width:153.39999999999998px;height:10.5px;background:linear-gradient(#f6f7f7,#eff0f1);border:1px solid #dfe1e2;border-radius:1px"></div><div class="a" style="left:595.4px;top:185px;width:1px;height:8.5px;background:#dfe1e2"></div><svg class="a" style="left:597.9px;top:187.75px" width="4" height="3"><path d="M0.5,0.8 L3.5,0.8 L2,2.5z" fill="#aaa"/></svg>
<div class="t" style="left:472.4px;top:186.3px;font-size:6.2px;font-weight:normal;color:#a2a2a2;">DIN EN ISO 7092</div>
<div class="a" style="left:438px;top:202px;width:7px;height:7px;background:#fcfcfc;border:1px solid #a8a8a8"></div>
<div class="a" style="left:451px;top:200.2px;width:153.39999999999998px;height:10.800000000000011px;background:linear-gradient(#f6f7f7,#eff0f1);border:1px solid #dfe1e2;border-radius:1px"></div><div class="a" style="left:595.4px;top:201.2px;width:1px;height:8.800000000000011px;background:#dfe1e2"></div><svg class="a" style="left:597.9px;top:204.1px" width="4" height="3"><path d="M0.5,0.8 L3.5,0.8 L2,2.5z" fill="#aaa"/></svg>
<div class="t" style="left:472.4px;top:202.6px;font-size:6.2px;font-weight:normal;color:#a2a2a2;">DIN EN ISO 7092</div>
<div class="t" style="right:192.2px;top:216.9px;font-size:6.5px;font-weight:bold;color:#454545;">Nut</div>
<div class="a" style="left:438px;top:221.5px;width:7px;height:7px;background:#fcfcfc;border:1px solid #a8a8a8"></div><svg class="a" style="left:438px;top:220.5px" width="9" height="9"><path d="M1.5,4.5 L3.5,7 L8,1" stroke="#222" stroke-width="1.3" fill="none"/></svg>
<div class="a" style="left:451px;top:215.8px;width:153.39999999999998px;height:16.5px;background:linear-gradient(#fdfdfd,#f1f2f3);border:1px solid #d2d4d6;border-radius:1px"></div><div class="a" style="left:595.4px;top:216.8px;width:1px;height:14.5px;background:#d2d4d6"></div><svg class="a" style="left:597.9px;top:222.55px" width="4" height="3"><path d="M0.5,0.8 L3.5,0.8 L2,2.5z" fill="#666"/></svg>
<div class="t" style="left:472.4px;top:221.2px;font-size:6.4px;font-weight:normal;color:#444;">ISO 4035 - 14H</div>
<div class="t" style="left:405.0px;top:238.6px;font-size:6.8px;font-weight:normal;color:#3a3a3a;-webkit-text-stroke:0.15px #3a3a3a">2D - Preview</div>
<div class="a" style="left:450px;top:241px;width:154px;height:1px;background:#e0e2e4"></div>
<div class="a" style="left:395px;top:361px;width:226px;height:1px;background:#dfe1e3"></div>
<div class="a" style="left:394px;top:367.5px;width:29px;height:11.5px;background:linear-gradient(#fdfdfd,#eceded);border:1px solid #cfd1d3;border-radius:1.5px"></div>
<div class="t" style="left:358.5px;width:100px;text-align:center;top:370.3px;font-size:6.2px;font-weight:bold;color:#444;">Preview</div>
<div class="a" style="left:549.8px;top:367.5px;width:31.8px;height:11.5px;background:linear-gradient(#b9dcf6,#8cc4ee);border:1px solid #a4cdea;border-radius:1.5px"></div>
<div class="t" style="left:515.7px;width:100px;text-align:center;top:370.2px;font-size:6.4px;font-weight:bold;color:#333;">OK</div>
<div class="a" style="left:585px;top:367.5px;width:32px;height:11.5px;background:linear-gradient(#fdfdfd,#eceded);border:1px solid #cfd1d3;border-radius:1.5px"></div>
<div class="t" style="left:551.0px;width:100px;text-align:center;top:370.2px;font-size:6.4px;font-weight:bold;color:#444;">Cancel</div>
<svg class="a" style="left:0;top:0" width="632" height="425">
<rect x="456.6" y="255.9" width="97.4" height="37.6" fill="#a8afc0"/>
<rect x="456.6" y="293.5" width="97.4" height="50.5" fill="#9bd3f6"/>
<line x1="456.6" y1="256.2" x2="554" y2="256.2" stroke="#6a6f7c" stroke-width="0.8"/>
<line x1="456.6" y1="293.5" x2="554" y2="293.5" stroke="#5c6270" stroke-width="0.9"/>
<line x1="456.6" y1="343.6" x2="554" y2="343.6" stroke="#5a6a7a" stroke-width="0.9"/>
<rect x="503.6" y="257" width="4.3" height="87" fill="#ffffff" stroke="#555" stroke-width="0.5"/>
<rect x="503.6" y="257" width="4.3" height="29.4" fill="#f2e48a" stroke="#555" stroke-width="0.5"/>
<rect x="501.2" y="254" width="9.6" height="2.8" fill="#f2e48a" stroke="#555" stroke-width="0.5"/>
<rect x="502" y="344" width="8" height="2.3" fill="#e8b080" stroke="#8a6040" stroke-width="0.4"/>
<line x1="544" y1="257" x2="544" y2="343" stroke="#111" stroke-width="0.6"/>
<path d="M542.6,260 L544,256.5 L545.4,260z M542.6,290.3 L544,293.3 L545.4,290.3z M542.6,296.6 L544,293.7 L545.4,296.6z M542.6,340 L544,343.3 L545.4,340z" fill="#111"/>
<text x="532" y="277" font-family="Liberation Sans" font-size="6.2" fill="#333" text-anchor="middle">15.000</text>
<text x="532" y="321" font-family="Liberation Sans" font-size="6.2" fill="#333" text-anchor="middle">20.000</text>
</svg>

<svg class="a" style="left:380px;top:100px" width="240" height="150" viewBox="380 100 240 150">
  <!-- bolt icon in screw dropdown -->
  <rect x="458.8" y="106.3" width="8.6" height="3" rx="0.6" fill="#d0d0d0" stroke="#666" stroke-width="0.6"/>
  <rect x="461" y="109.3" width="4.2" height="11" fill="#dcdcdc" stroke="#666" stroke-width="0.6"/>
  <path d="M461.2,112h3.8 M461.2,114h3.8 M461.2,116h3.8 M461.2,118h3.8" stroke="#888" stroke-width="0.4"/>
  <!-- thread btn icon 1 -->
  <rect x="505.6" y="129.3" width="5.4" height="6.5" fill="#c8c8c8" stroke="#777" stroke-width="0.5"/>
  <path d="M506.6,130v6 M508.3,130v6 M510,130v6" stroke="#999" stroke-width="0.4"/>
  <path d="M504.6,136.5 h7.5 v2 h-7.5z" fill="#222"/>
  <path d="M506.3,136.5 l2,1.2 l2,-1.2" fill="#fafafa"/>
  <!-- thread btn icon 2 -->
  <path d="M573.5,130 q2.5,-1.5 5,0 v1 h-5z" fill="#ccc" stroke="#666" stroke-width="0.5"/>
  <rect x="574.3" y="131" width="3.4" height="7" fill="#d4d4d4" stroke="#666" stroke-width="0.5"/>
  <path d="M580.3,129.8 v8.6 M579.3,129.8 h2 M579.3,138.4h2" stroke="#222" stroke-width="0.7"/>
  <!-- thread btn icon 3 -->
  <path d="M594.5,130 q2.5,-1.5 5,0 v1 h-5z" fill="#ccc" stroke="#666" stroke-width="0.5"/>
  <rect x="595.3" y="131" width="3.4" height="7" fill="#d4d4d4" stroke="#666" stroke-width="0.5"/>
  <path d="M598,131 l2.5,-1.5 l1,1.5" fill="#222"/>
  <circle cx="600.5" cy="137" r="1.8" fill="#e04a2a"/>
  <!-- washer icons -->
  <g fill="#c6c6c6">
    <rect x="455" y="149.1" width="5.5" height="4.8"/><rect x="461.5" y="149.1" width="2" height="4.8"/><rect x="464.5" y="149.1" width="6" height="4.8"/>
    <rect x="455" y="165" width="5.5" height="4.8"/><rect x="461.5" y="165" width="2" height="4.8"/><rect x="464.5" y="165" width="6" height="4.8"/>
    <rect x="455" y="187.2" width="5.5" height="4.8"/><rect x="461.5" y="187.2" width="2" height="4.8"/><rect x="464.5" y="187.2" width="6" height="4.8"/>
    <rect x="455" y="203.3" width="5.5" height="4.8"/><rect x="461.5" y="203.3" width="2" height="4.8"/><rect x="464.5" y="203.3" width="6" height="4.8"/>
  </g>
  <!-- nut icon -->
  <rect x="458.3" y="222.2" width="8.6" height="4" rx="0.8" fill="#bfbfbf" stroke="#666" stroke-width="0.6"/>
  <path d="M460.8,222.5v3.5 M464.3,222.5v3.5" stroke="#555" stroke-width="0.5"/>
  <!-- cursor -->
  <path d="M516.8,191.5 v7.5 l1.8,-1.6 l1.3,2.8 l1,-0.5 l-1.3,-2.7 l2.4,-0.2z" fill="#fff" stroke="#222" stroke-width="0.6"/>
  <!-- 2D preview toggle -->
  <path d="M396.3,240.5 h2.6 M396.3,242.3 h2.6" stroke="#777" stroke-width="0.6"/>
</svg>
<!-- /DIALOG CONTENT -->
</div>
</body></html>
